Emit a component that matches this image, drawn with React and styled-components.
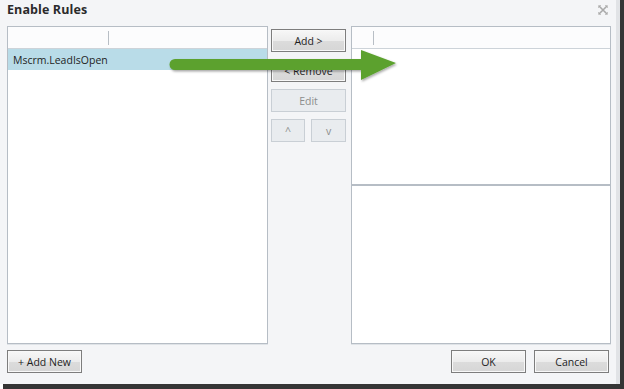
import React from 'react'
import styled, { createGlobalStyle } from 'styled-components'

const GlobalStyle = createGlobalStyle`
  html, body {
    margin: 0;
    padding: 0;
    background: #ffffff;
  }
  * {
    box-sizing: border-box;
  }
`

const Shell = styled.div`
  width: 624px;
  height: 389px;
  padding: 0 4px 5px 0;
  background: linear-gradient(to right, #ffffff 0, #ffffff 3px, transparent 3px),
    #353535;
  background-size: 100% 100%;
`

const Dialog = styled.div`
  position: relative;
  width: 620px;
  height: 384px;
  background: #f4f5f7;
  border-right: 4px solid #e1e3e6;
  padding: 0 5px 0 7px;
  display: flex;
  flex-direction: column;
  font-family: "Open Sans", "DejaVu Sans", sans-serif;
  font-size: 10.5px;
  color: #222;
`

const TitleBar = styled.div`
  height: 26px;
  display: flex;
  align-items: flex-start;
  justify-content: space-between;
  padding-top: 1px;
`

const Title = styled.h1`
  margin: 0;
  font-size: 12.5px;
  font-weight: bold;
  color: #2b2b2b;
  letter-spacing: 0.1px;
`

const Close = styled.svg`
  margin: 4px 3px 0 0;
`

const Main = styled.div`
  display: flex;
  height: 319px;
`

const Panel = styled.div`
  background: #ffffff;
  border: 1px solid #b6bdc5;
  width: ${p => p.w}px;
  height: ${p => p.h}px;
  display: flex;
  flex-direction: column;
  box-shadow: 0 1px 0 #dfe3e7;
`

const Header = styled.div`
  height: 22px;
  border-bottom: 1px solid #cdd3d9;
  background: #fcfcfd;
  display: flex;
  align-items: center;
`

const HeaderCell = styled.div`
  width: ${p => p.w}px;
  height: 14px;
  border-right: 1px solid #b8bec5;
`

const Row = styled.div`
  height: 21px;
  display: flex;
  align-items: center;
  padding-left: 5px;
  background: ${p => (p.selected ? '#b9dce8' : 'transparent')};
  color: #1e1e1e;
`

const Middle = styled.div`
  width: 75px;
  margin: 0 5px 0 3px;
  padding-top: 3px;
  display: flex;
  flex-direction: column;
  gap: 7px;
`

const Button = styled.button`
  width: ${p => p.w || 75}px;
  height: 23px;
  font-family: inherit;
  font-size: 10.5px;
  padding: 0;
  border: 1px solid ${p => (p.disabled ? '#c9cfd5' : '#7d7d7d')};
  background: ${p =>
    p.disabled
      ? '#e9ecef'
      : 'linear-gradient(#f7f7f7 0%, #ececec 50%, #dcdcdc 51%, #d6d6d6 100%)'};
  color: ${p => (p.disabled ? '#8c8c8c' : '#1e1e1e')};
  box-shadow: ${p => (p.disabled ? 'none' : 'inset 0 0 0 1px #f8f8f8')};
`

const ArrowRow = styled.div`
  display: flex;
  justify-content: space-between;
`

const RightCol = styled.div`
  display: flex;
  flex-direction: column;
`

const Footer = styled.div`
  margin-top: 5px;
  padding-right: 2px;
  display: flex;
  align-items: center;
  gap: 8px;
`

const Spacer = styled.div`
  flex: 1;
`

const Arrow = styled.svg`
  position: absolute;
  left: 165px;
  top: 46px;
  pointer-events: none;
`

export default function App() {
  return (
    <>
      <GlobalStyle />
      <Shell>
        <Dialog>
          <TitleBar>
            <Title>Enable Rules</Title>
            <Close width="10" height="10" viewBox="0 0 10 10">
              <path d="M1 1 L9 9 M9 1 L1 9" stroke="#a9a9a9" strokeWidth="1.6" />
              <path d="M0.5 0.5 h2.5 M7 0.5 h2.5 M0.5 9.5 h2.5 M7 9.5 h2.5 M0.5 0.5 v2.5 M9.5 0.5 v2.5 M0.5 7 v2.5 M9.5 7 v2.5" stroke="#c4c4c4" strokeWidth="1" />
            </Close>
          </TitleBar>
          <Main>
            <Panel w={262} h={318}>
              <Header>
                <HeaderCell w={101} />
              </Header>
              <Row selected>Mscrm.LeadIsOpen</Row>
            </Panel>
            <Middle>
              <Button>Add &gt;</Button>
              <Button>&lt; Remove</Button>
              <Button disabled>Edit</Button>
              <ArrowRow>
                <Button disabled w={34}>^</Button>
                <Button disabled w={35}>v</Button>
              </ArrowRow>
            </Middle>
            <RightCol>
              <Panel w={260} h={159}>
                <Header>
                  <HeaderCell w={22} />
                </Header>
              </Panel>
              <Panel w={260} h={159}>
              </Panel>
            </RightCol>
          </Main>
          <Footer>
            <Button>+ Add New</Button>
            <Spacer />
            <Button>OK</Button>
            <Button>Cancel</Button>
          </Footer>
          <Arrow width="240" height="40" viewBox="0 0 240 40">
            <defs>
              <filter id="sh" x="-10%" y="-30%" width="120%" height="160%">
                <feDropShadow dx="1" dy="1.5" stdDeviation="1" floodColor="#000" floodOpacity="0.35" />
              </filter>
            </defs>
            <g filter="url(#sh)">
              <path
                d="M10 13 L196 13 L196 4 L231 17 L196 34 L196 24 L10 24 A5.5 5.5 0 0 1 10 13 Z"
                fill="#5ba12d"
              />
            </g>
          </Arrow>
        </Dialog>
      </Shell>
    </>
  )
}
